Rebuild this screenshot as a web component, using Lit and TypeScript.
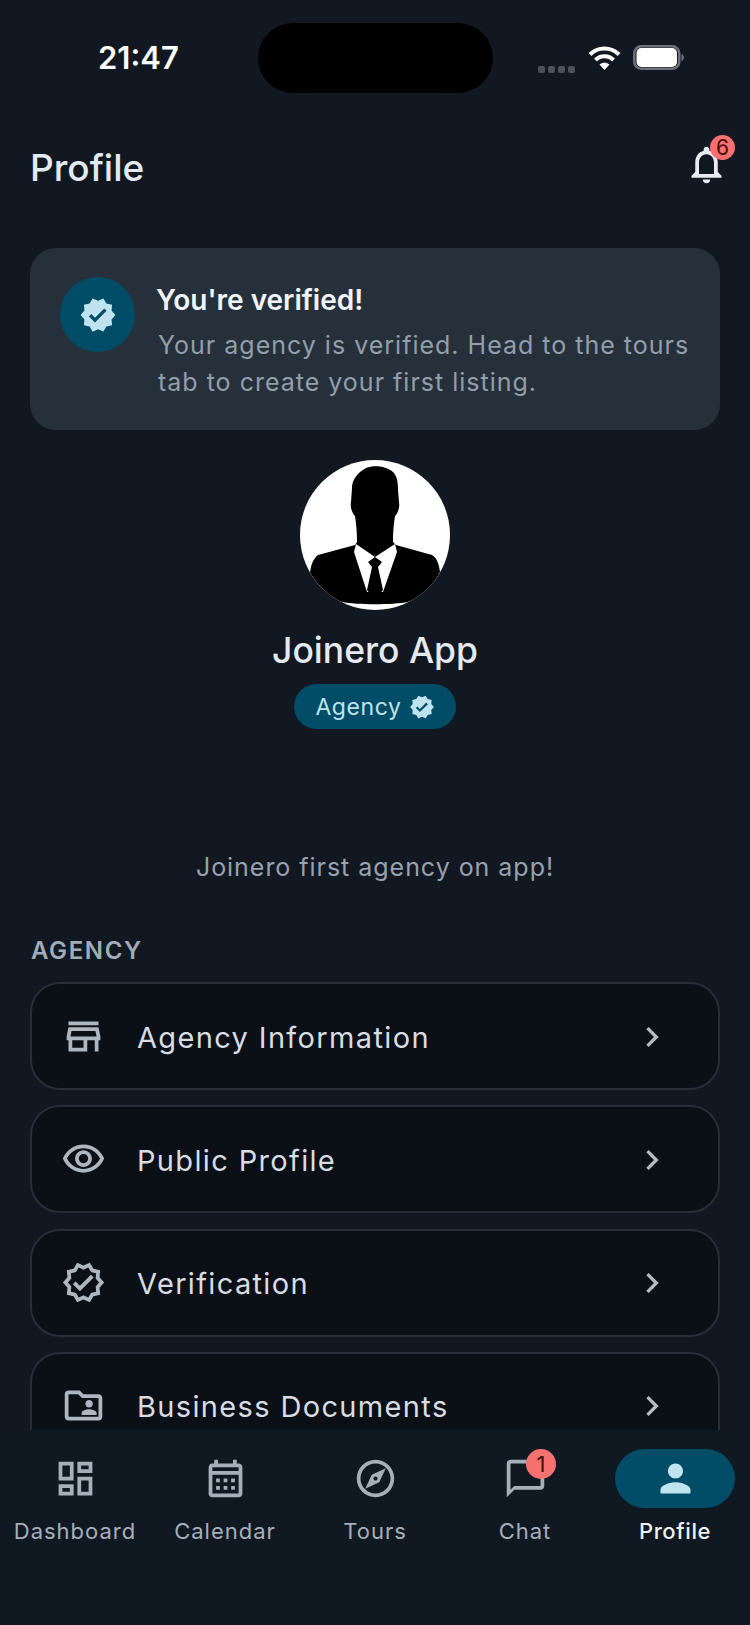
import { LitElement, css, html, svg } from 'lit';
import { customElement } from 'lit/decorators.js';
import { classMap } from 'lit/directives/class-map.js';

const ICONS = {
  bell: 'M12 22c1.1 0 2-.9 2-2h-4c0 1.1.9 2 2 2zm6-6v-5c0-3.07-1.63-5.64-4.5-6.32V4c0-.83-.67-1.5-1.5-1.5s-1.5.67-1.5 1.5v.68C7.64 5.36 6 7.92 6 11v5l-2 2v1h16v-1l-2-2zm-2 1H8v-6c0-2.48 1.51-4.5 4-4.5s4 2.02 4 4.5v6z',
  verifiedFilled: 'M23 12l-2.44-2.79.34-3.69-3.61-.82-1.89-3.2L12 2.96 8.6 1.5 6.71 4.69 3.1 5.5l.34 3.7L1 12l2.44 2.79-.34 3.7 3.61.82L8.6 22.5l3.4-1.47 3.4 1.46 1.89-3.19 3.61-.82-.34-3.69L23 12zm-12.91 4.72l-3.8-3.81 1.48-1.48 2.32 2.33 5.85-5.87 1.48 1.48-7.33 7.35z',
  store: 'M18.36 9l.6 3H5.04l.6-3h12.72M20 4H4v2h16V4zm0 3H4l-1 5v2h1v6h10v-6h4v6h2v-6h1v-2l-1-5zM6 18v-4h6v4H6z',
  eye: 'M12 6c3.79 0 7.17 2.13 8.82 5.5C19.17 14.87 15.79 17 12 17s-7.17-2.13-8.82-5.5C4.83 8.13 8.21 6 12 6m0-2C7 4 2.73 7.11 1 11.5 2.73 15.89 7 19 12 19s9.27-3.11 11-7.5C21.27 7.11 17 4 12 4zm0 5c1.38 0 2.5 1.12 2.5 2.5S13.38 14 12 14s-2.5-1.12-2.5-2.5S10.62 9 12 9m0-2c-2.48 0-4.5 2.02-4.5 4.5S9.52 16 12 16s4.5-2.02 4.5-4.5S14.48 7 12 7z',
  verified: 'M23 11.99l-2.44-2.79.34-3.69-3.61-.82L15.4 1.5 12 2.96 8.6 1.5 6.71 4.69 3.1 5.5l.34 3.7L1 11.99l2.44 2.79-.34 3.7 3.61.82L8.6 22.5l3.4-1.47 3.4 1.46 1.89-3.19 3.61-.82-.34-3.69L23 11.99zm-3.95 1.48l-.56.65.08.85.18 1.95-1.9.43-.84.19-.44.74-.99 1.68-1.78-.77-.8-.34-.79.34-1.78.77-.99-1.67-.44-.74-.84-.19-1.9-.43.18-1.96.08-.85-.56-.65L3.67 12l1.29-1.48.56-.65-.09-.86-.18-1.94 1.9-.43.84-.19.44-.74.99-1.68 1.78.77.8.34.79-.34 1.78-.77.99 1.68.44.74.84.19 1.9.43-.18 1.95-.08.85.56.65 1.29 1.47-1.28 1.47zM10.09 13.75l-2.32-2.33-1.48 1.49 3.8 3.81 7.34-7.36-1.48-1.49z',
  folder: 'M20 6h-8l-2-2H4c-1.1 0-2 .9-2 2v12c0 1.1.9 2 2 2h16c1.1 0 2-.9 2-2V8c0-1.1-.9-2-2-2zm0 12H4V6h5.17l2 2H20v10zm-5-5c1.1 0 2-.9 2-2s-.9-2-2-2-2 .9-2 2 .9 2 2 2zm-4 4h8v-1c0-1.33-2.67-2-4-2s-4 .67-4 2v1z',
  chevron: 'M10 6L8.59 7.41 13.17 12l-4.58 4.59L10 18l6-6z',
  dashboard: 'M19 5v2h-4V5h4M9 5v6H5V5h4m10 8v6h-4v-6h4M9 17v2H5v-2h4M21 3h-8v6h8V3zM11 3H3v10h8V3zm10 8h-8v10h8V11zm-10 4H3v6h8v-6z',
  calendar: 'M19 4h-1V2h-2v2H8V2H6v2H5c-1.11 0-1.99.9-1.99 2L3 20c0 1.1.89 2 2 2h14c1.1 0 2-.9 2-2V6c0-1.1-.9-2-2-2zm0 16H5V10h14v10zm0-12H5V6h14v2zM9 14H7v-2h2v2zm4 0h-2v-2h2v2zm4 0h-2v-2h2v2zm-8 4H7v-2h2v2zm4 0h-2v-2h2v2zm4 0h-2v-2h2v2z',
  explore: 'M12 2C6.48 2 2 6.48 2 12s4.48 10 10 10 10-4.48 10-10S17.52 2 12 2zm0 18c-4.41 0-8-3.59-8-8s3.59-8 8-8 8 3.59 8 8-3.59 8-8 8zm-5.5-2.5l7.51-3.49L17.5 6.5 9.99 9.99 6.5 17.5zm5.5-6.6c.61 0 1.1.49 1.1 1.1s-.49 1.1-1.1 1.1-1.1-.49-1.1-1.1.49-1.1 1.1-1.1z',
  chat: 'M20 2H4c-1.1 0-2 .9-2 2v18l4-4h14c1.1 0 2-.9 2-2V4c0-1.1-.9-2-2-2zm0 14H6l-2 2V4h16v12z',
  person: 'M12 12c2.21 0 4-1.79 4-4s-1.79-4-4-4-4 1.79-4 4 1.79 4 4 4zm0 2c-2.67 0-8 1.34-8 4v2h16v-2c0-2.66-5.33-4-8-4z',
};

const icon = (d: string, cls = '') =>
  html`<svg class="icon ${cls}" viewBox="0 0 24 24" fill="currentColor"><path d=${d}></path></svg>`;

const ROWS = [
  { label: 'Agency Information', d: ICONS.store },
  { label: 'Public Profile', d: ICONS.eye },
  { label: 'Verification', d: ICONS.verified },
  { label: 'Business Documents', d: ICONS.folder },
];

const TABS = [
  { label: 'Dashboard', d: ICONS.dashboard },
  { label: 'Calendar', d: ICONS.calendar },
  { label: 'Tours', d: ICONS.explore },
  { label: 'Chat', d: ICONS.chat, badge: '1' },
  { label: 'Profile', d: ICONS.person, active: true },
];

const avatar = svg`
  <defs><clipPath id="avatar-clip"><circle cx="75" cy="75" r="75"></circle></clipPath></defs>
  <circle cx="75" cy="75" r="75" fill="#fff"></circle>
  <g clip-path="url(#avatar-clip)">
    <path fill="#000" d="M66 8 C74 5 86 6 93 12 C97 16 98 22 98 30 L99 42 C100 47 98 53 95 56 C94 63 93 70 93 82 L96 85 L132 95 C137 98 139 104 140 112 C132 128 120 138 108 142 C92 145 58 145 42 142 C30 138 18 126 10 113 C11 105 13 99 18 95 L55 85 L57 82 C57 70 56 63 55 56 C52 53 50 47 51 42 L52 28 C52 20 57 13 66 8 Z"></path>
    <path fill="#fff" d="M56 84 L75 97 L95 84 L97 92 L83 132 L67 132 L54 92 Z"></path>
    <path fill="#000" d="M75 97 L82 102 L78 107 L83 130 L75 140 L67 130 L72 107 L68 102 Z"></path>
  </g>
`;

@customElement('app-root')
export class AppRoot extends LitElement {
  static styles = css`
    :host {
      display: flex;
      flex-direction: column;
      width: 750px;
      height: 1625px;
      overflow: hidden;
      background: #111822;
      color: #e5e9f0;
      font-family: Inter, "Liberation Sans", sans-serif;
    }

    .icon {
      display: block;
      flex: none;
      width: 45px;
      height: 45px;
    }

    .status {
      display: grid;
      grid-template-columns: 258px 235px 1fr;
      padding-top: 23px;
      height: 69px;
    }
    .time {
      padding-left: 98px;
      font-size: 31px;
      font-weight: 600;
      line-height: 70px;
      color: #fff;
    }
    .island {
      background: #000;
      border-radius: 35px;
    }
    .status-right {
      display: flex;
      align-items: center;
      padding: 0 0 0 45px;
    }
    .dots {
      display: flex;
      gap: 3px;
      margin-top: 22px;
      margin-right: 13px;
    }
    .dots span {
      width: 7px;
      height: 7px;
      border-radius: 2px;
      background: #4a525c;
    }
    .wifi {
      width: 33px;
      height: 25px;
      margin-right: 12px;
      margin-top: -2px;
    }
    .battery {
      width: 52px;
      height: 25px;
      margin-top: -2px;
    }

    .header {
      display: flex;
      justify-content: space-between;
      align-items: center;
      padding: 50px 5px 0 30px;
      height: 45px;
    }
    .title {
      margin: 6px 0 0;
      font-size: 37px;
      font-weight: 500;
    }
    .bell {
      position: relative;
      color: #e8ecf2;
      margin-right: 16px;
    }
    .bell-badge {
      position: absolute;
      top: -7px;
      right: -6px;
      width: 25px;
      height: 25px;
      border-radius: 50%;
      background: #f87171;
      color: #450a0a;
      font-size: 21px;
      line-height: 25px;
      text-align: center;
    }

    .main {
      flex: 1;
      min-height: 0;
      overflow: hidden;
      padding: 61px 30px 0;
    }

    .notice {
      display: flex;
      gap: 21px;
      height: 182px;
      box-sizing: border-box;
      padding: 29px 30px;
      border-radius: 26px;
      background: #26303b;
    }
    .notice-mark {
      display: flex;
      align-items: center;
      justify-content: center;
      flex: none;
      width: 75px;
      height: 75px;
      border-radius: 50%;
      background: #014c66;
      color: #bfe4ef;
    }
    .notice-mark .icon {
      width: 38px;
      height: 38px;
    }
    .notice-text {
      padding-top: 5px;
    }
    .notice-title {
      font-size: 28px;
      font-weight: 600;
      line-height: 36px;
      color: #f1f4f8;
    }
    .notice-body {
      margin: 9px 0 0 2px;
      font-size: 25px;
      line-height: 37px;
      letter-spacing: 1px;
      color: #939eab;
    }

    .identity {
      display: flex;
      flex-direction: column;
      align-items: center;
      padding-top: 30px;
    }
    .avatar {
      display: block;
      width: 150px;
      height: 150px;
    }
    .name {
      margin-top: 18px;
      font-size: 35.5px;
      font-weight: 500;
      line-height: 46px;
    }
    .pill {
      display: flex;
      align-items: center;
      justify-content: center;
      gap: 7px;
      width: 162px;
      height: 45px;
      margin-top: 10px;
      border-radius: 23px;
      background: #014c66;
      color: #bfe4ef;
      font-size: 23px;
      letter-spacing: 0.6px;
    }
    .pill .icon {
      width: 26px;
      height: 26px;
    }
    .tagline {
      margin-top: 120px;
      font-size: 25px;
      line-height: 36px;
      letter-spacing: 0.97px;
      text-align: center;
      color: #98a2ae;
    }

    .section-label {
      margin-top: 52px;
      padding-left: 1px;
      font-size: 24px;
      font-weight: 600;
      line-height: 28px;
      letter-spacing: 1.6px;
      color: #a2acb7;
    }
    .rows {
      display: flex;
      flex-direction: column;
      gap: 15.3px;
      margin-top: 17px;
    }
    .row {
      display: flex;
      flex: none;
      align-items: center;
      gap: 31px;
      height: 108px;
      box-sizing: border-box;
      padding: 0 46px 0 29px;
      border: 2px solid #272e38;
      border-radius: 30px;
      background: #0b0f16;
      color: #aeb6c0;
    }
    .row-label {
      flex: 1;
      padding-top: 2px;
      font-size: 29px;
      letter-spacing: 1.35px;
      color: #d8dde4;
    }
    .row .chevron {
      width: 40px;
      height: 40px;
      margin-top: 1px;
      color: #b4bcc6;
    }

    .nav {
      display: grid;
      grid-template-columns: repeat(5, 150px);
      flex: none;
      height: 195px;
      box-sizing: border-box;
      padding-top: 19px;
      background: #101822;
    }
    .tab {
      display: flex;
      flex-direction: column;
      align-items: center;
      color: #a6afba;
    }
    .tab-icon {
      position: relative;
      display: flex;
      align-items: center;
      justify-content: center;
      width: 120px;
      height: 59px;
      border-radius: 30px;
    }
    .tab-label {
      margin-top: 8px;
      font-size: 22px;
      line-height: 30px;
      letter-spacing: 1px;
    }
    .tab.active .tab-icon {
      background: #014c66;
      color: #bfe4ef;
    }
    .tab.active .tab-label {
      font-weight: 500;
      letter-spacing: 0.6px;
      color: #eef1f5;
    }
    .tab-badge {
      position: absolute;
      top: 0;
      right: 29px;
      width: 30px;
      height: 30px;
      border-radius: 50%;
      background: #f87171;
      color: #450a0a;
      font-size: 22px;
      line-height: 30px;
      text-align: center;
    }
  `;

  render() {
    return html`
      <div class="status">
        <div class="time">21:47</div>
        <div class="island"></div>
        <div class="status-right">
          <div class="dots"><span></span><span></span><span></span><span></span></div>
          <svg class="wifi" viewBox="0 0 33 25" fill="none" stroke="#fff" stroke-width="4">
            <path d="M2 9.5 C10 1.5 23 1.5 31 9.5"></path>
            <path d="M7.5 15 C12.5 10 20.5 10 25.5 15"></path>
            <path d="M16.5 25 L11.5 19.5 C14.5 17 18.5 17 21.5 19.5 Z" fill="#fff" stroke="none"></path>
          </svg>
          <svg class="battery" viewBox="0 0 52 25">
            <rect x="1.25" y="1.25" width="45" height="22.5" rx="7" fill="none" stroke="#6d727a" stroke-width="2.5"></rect>
            <rect x="3.5" y="3" width="40.5" height="19" rx="5" fill="#fff"></rect>
            <path d="M48.5 9 C50 9.6 51 11 51 12.5 C51 14 50 15.4 48.5 16 Z" fill="#6d727a"></path>
          </svg>
        </div>
      </div>

      <header class="header">
        <h1 class="title">Profile</h1>
        <div class="bell">
          ${icon(ICONS.bell)}
          <span class="bell-badge">6</span>
        </div>
      </header>

      <main class="main">
        <section class="notice">
          <div class="notice-mark">${icon(ICONS.verifiedFilled)}</div>
          <div class="notice-text">
            <div class="notice-title">You're verified!</div>
            <div class="notice-body">Your agency is verified. Head to the tours tab to create your first listing.</div>
          </div>
        </section>

        <section class="identity">
          <svg class="avatar" viewBox="0 0 150 150">${avatar}</svg>
          <div class="name">Joinero App</div>
          <div class="pill">Agency ${icon(ICONS.verifiedFilled)}</div>
        </section>

        <div class="tagline">Joinero first agency on app!</div>

        <div class="section-label">AGENCY</div>
        <div class="rows">
          ${ROWS.map(
            (row) => html`
              <div class="row">
                ${icon(row.d)}
                <span class="row-label">${row.label}</span>
                ${icon(ICONS.chevron, 'chevron')}
              </div>
            `,
          )}
        </div>
      </main>

      <nav class="nav">
        ${TABS.map(
          (tab) => html`
            <div class=${classMap({ tab: true, active: !!tab.active })}>
              <div class="tab-icon">
                ${icon(tab.d)}
                ${tab.badge ? html`<span class="tab-badge">${tab.badge}</span>` : ''}
              </div>
              <div class="tab-label">${tab.label}</div>
            </div>
          `,
        )}
      </nav>
    `;
  }
}
